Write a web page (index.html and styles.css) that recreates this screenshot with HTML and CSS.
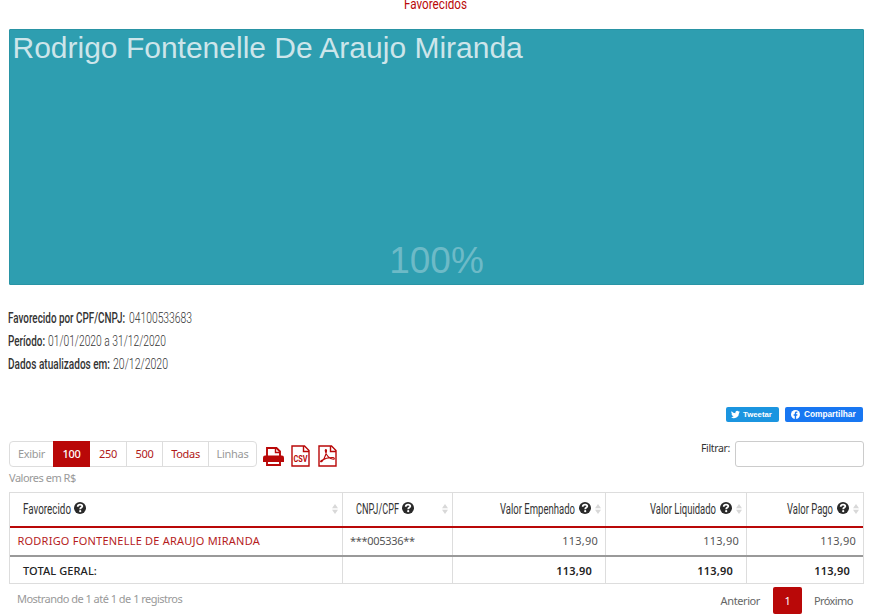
FILE: index.html
```
<!DOCTYPE html>
<html lang="pt-BR">
<head>
<meta charset="utf-8">
<title>Favorecidos</title>
<link rel="stylesheet" href="styles.css">
</head>
<body>
<svg class="defs" width="0" height="0">
  <symbol id="help" viewBox="0 0 12 12"><circle cx="6" cy="6" r="6" fill="#292929"/><path d="M3.700 4.700C3.800 3.300 4.800 2.700 6.100 2.700c1.300 0 2.200.6 2.200 1.600C8.300 5.600 6.200 5.600 6.200 7.200" fill="none" stroke="#fff" stroke-width="1.800"/><circle cx="6.200" cy="9.200" r="1.100" fill="#fff"/></symbol>
  <symbol id="sort" viewBox="0 0 6 10"><path d="M3 0l3 4.300H0zM3 10l3-4.300H0z" fill="#d8d8d8"/></symbol>
</svg>
<h1 class="heading"><svg class="narrow" width="64" height="20"><text x="0" y="15" textLength="63" lengthAdjust="spacingAndGlyphs">Favorecidos</text></svg></h1>
<section class="treemap">
  <div class="name">Rodrigo Fontenelle De Araujo Miranda</div>
  <div class="share">100%</div>
</section>
<section class="info">
  <div><svg class="narrow label" width="118" height="23"><text x="0" y="16" textLength="117" lengthAdjust="spacingAndGlyphs">Favorecido por CPF/CNPJ:</text></svg><svg class="narrow value" width="63" height="23"><text x="0" y="16" textLength="63" lengthAdjust="spacingAndGlyphs">04100533683</text></svg></div>
  <div><svg class="narrow label" width="37" height="23"><text x="0" y="16" textLength="37" lengthAdjust="spacingAndGlyphs">Período:</text></svg><svg class="narrow value" width="118" height="23"><text x="0" y="16" textLength="118" lengthAdjust="spacingAndGlyphs">01/01/2020 a 31/12/2020</text></svg></div>
  <div><svg class="narrow label" width="102" height="23"><text x="0" y="16" textLength="102" lengthAdjust="spacingAndGlyphs">Dados atualizados em:</text></svg><svg class="narrow value" width="55" height="23"><text x="0" y="16" textLength="55" lengthAdjust="spacingAndGlyphs">20/12/2020</text></svg></div>
</section>
<div class="social">
  <a class="tweet"><svg width="9" height="9" viewBox="0 0 24 24"><path fill="#fff" d="M24 4.600a10 10 0 0 1-2.800.8 5 5 0 0 0 2.100-2.700 10 10 0 0 1-3.100 1.200 4.900 4.900 0 0 0-8.400 4.500A14 14 0 0 1 1.700 3.100a4.900 4.900 0 0 0 1.500 6.600 5 5 0 0 1-2.200-.6 4.900 4.900 0 0 0 3.900 4.900 5 5 0 0 1-2.200.1 4.900 4.900 0 0 0 4.600 3.400A9.900 9.900 0 0 1 0 19.500 14 14 0 0 0 21.500 7.100 10 10 0 0 0 24 4.600z"/></svg><span>Tweetar</span></a>
  <a class="facebook"><svg width="9" height="9" viewBox="0 0 24 24"><circle cx="12" cy="12" r="12" fill="#fff"/><path d="M10 24v-9H7v-3.500h3V9c0-3 1.800-4.700 4.500-4.700l2.600.2v3h-1.500c-1.500 0-1.900.9-1.900 1.800v2.200H17l-.5 3.500h-2.800v9z" fill="#1877f2"/></svg><span>Compartilhar</span></a>
</div>
<div class="toolbar">
  <div class="pages"><span class="exibir">Exibir</span><a class="active">100</a><a>250</a><a>500</a><a class="todas">Todas</a><span class="linhas">Linhas</span></div>
  <div class="export">
    <svg width="21" height="19" viewBox="0 0 21 19"><path d="M4 9V1h9.500L17 4.500V9" fill="none" stroke="#b90808" stroke-width="1.900"/><path d="M12.500 1v4.500H17" fill="none" stroke="#b90808" stroke-width="1.400"/><path d="M2.500 8.500h16a2.300 2.300 0 0 1 2.500 2.300V15H0v-4.200a2.300 2.300 0 0 1 2.500-2.300z" fill="#b90808"/><path d="M4 14v4h13v-4" fill="none" stroke="#b90808" stroke-width="1.900"/></svg>
    <svg width="19" height="22" viewBox="0 0 19 22"><path d="M1 1h12.500L18 5.500V21H1zM12.500 1v5.500H18" fill="none" stroke="#b90808" stroke-width="1.400"/><text class="csv" x="2.500" y="17" textLength="14" lengthAdjust="spacingAndGlyphs">CSV</text></svg>
    <svg width="19" height="22" viewBox="0 0 19 22"><path d="M1 1h12.500L18 5.500V21H1zM12.500 1v5.500H18" fill="none" stroke="#b90808" stroke-width="1.400"/><path d="M2.800 16.800c1.500.4 5.400-5.600 5.700-11.100.1-1.600-1.500-1.500-1.200.2.600 4.100 4.200 8.600 8.300 8.400 1.200-.2.900-1.700-.8-1.800-4.200-.1-8.200 1-11.300 3-.9.600-1.200 1.100-.7 1.300z" fill="none" stroke="#b90808" stroke-width="1.100"/></svg>
  </div>
  <label class="filter"><span>Filtrar:</span><input type="text"></label>
</div>
<p class="unit">Valores em R$</p>
<div class="table">
  <div class="row head">
    <div><svg class="narrow" width="48" height="20"><text x="0" y="15" textLength="48" lengthAdjust="spacingAndGlyphs">Favorecido</text></svg><svg class="help"><use href="#help"/></svg><svg class="sort"><use href="#sort"/></svg></div>
    <div><svg class="narrow" width="43" height="20"><text x="0" y="15" textLength="43" lengthAdjust="spacingAndGlyphs">CNPJ/CPF</text></svg><svg class="help"><use href="#help"/></svg><svg class="sort"><use href="#sort"/></svg></div>
    <div class="num"><svg class="narrow" width="76" height="20"><text x="0" y="15" textLength="75" lengthAdjust="spacingAndGlyphs">Valor Empenhado</text></svg><svg class="help"><use href="#help"/></svg><svg class="sort"><use href="#sort"/></svg></div>
    <div class="num"><svg class="narrow" width="67" height="20"><text x="0" y="15" textLength="66" lengthAdjust="spacingAndGlyphs">Valor Liquidado</text></svg><svg class="help"><use href="#help"/></svg><svg class="sort"><use href="#sort"/></svg></div>
    <div class="num"><svg class="narrow" width="47" height="20"><text x="0" y="15" textLength="46" lengthAdjust="spacingAndGlyphs">Valor Pago</text></svg><svg class="help"><use href="#help"/></svg><svg class="sort"><use href="#sort"/></svg></div>
  </div>
  <div class="row data"><div><a class="person">RODRIGO FONTENELLE DE ARAUJO MIRANDA</a></div><div class="doc">***005336**</div><div class="num">113,90</div><div class="num">113,90</div><div class="num">113,90</div></div>
  <div class="row total"><div>TOTAL GERAL:</div><div></div><div class="num">113,90</div><div class="num">113,90</div><div class="num">113,90</div></div>
</div>
<footer class="footer">
  <span class="status">Mostrando de 1 até 1 de 1 registros</span>
  <nav><a class="prev">Anterior</a><a class="current">1</a><a class="next">Próximo</a></nav>
</footer>
</body>
</html>
```
FILE: styles.css
```
* { box-sizing: border-box; }
body { margin: 0; width: 874px; height: 616px; overflow: hidden; background: #fff; font-family: "Noto Sans", sans-serif; font-size: 11px; color: #444; }
svg { display: block; flex: none; }
.defs { position: absolute; }
.narrow { font-family: Roboto, sans-serif; font-size: 15px; fill: #333; overflow: visible; }
.heading { margin: -6px 0 0 404px; height: 35px; }
.heading .narrow { fill: #b90808; font-weight: 400; }
.treemap { margin-left: 9px; width: 855px; height: 256px; background: #2e9eb0; border: 1px solid #2994a5; border-radius: 1px; display: flex; flex-direction: column; justify-content: space-between; font-family: "Liberation Sans", sans-serif; }
.name { padding-left: 2.5px; font-size: 30px; line-height: 36px; color: #cde5ea; white-space: nowrap; }
.share { text-align: center; font-size: 37px; line-height: 46px; color: #6dbac7; }
.info { margin: 22px 0 0 8px; height: 69px; }
.info div { display: flex; }
.label { font-weight: 500; margin-right: 2.5px; }
.value { font-weight: 300; }
.social { display: flex; gap: 6px; margin: 31px 0 0 726px; }
.social a { display: flex; align-items: center; height: 15px; border-radius: 2px; color: #fff; font: 700 8px/15px "Liberation Sans", sans-serif; padding-left: 5px; white-space: nowrap; }
.tweet { width: 53px; background: #1b95e0; }
.tweet span { margin-left: 3px; font-size: 7.8px; }
.facebook { width: 78px; background: #1877f2; }
.facebook svg { margin-left: 1px; }
.facebook span { margin-left: 4px; font-size: 8.3px; }
.toolbar { display: flex; height: 26px; margin: 19px 0 0 9px; width: 855px; }
.pages { display: flex; width: 248px; border: 1px solid #ddd; border-radius: 4px; line-height: 24px; color: #999; text-align: center; letter-spacing: -.3px; }
.pages > * { width: 36px; border-right: 1px solid #ddd; }
.pages .exibir { width: 43px; border: 0; }
.pages a { color: #b01818; }
.pages .active { width: 37px; margin: -1px 0; line-height: 26px; background: #b90808; color: #fff; border: 0; font-weight: 500; }
.pages a:nth-child(3) { width: 37px; }
.pages .todas { width: 46px; }
.pages .linhas { flex: 1; border: 0; }
.export { display: flex; gap: 8px; margin: 4px 0 0 6px; }
.export svg:first-child { margin: 2px -1px 0 0; }
.csv { font: 700 9px Roboto, sans-serif; fill: #b90808; }
.filter { display: flex; margin-left: auto; gap: 5px; }
.filter span { font-size: 10.5px; line-height: 15px; color: #333; letter-spacing: -.35px; }
.filter input { width: 129px; height: 26px; border: 1px solid #ccc; border-radius: 3px; padding: 0 4px; }
.unit { margin: 3px 0 0 9px; height: 22px; line-height: 16px; color: #999; letter-spacing: -.5px; }
.table { margin-left: 9px; width: 855px; border: 1px solid #ddd; }
.row { display: grid; grid-template-columns: 333px 110px 153px 141px 116px; }
.row > div { border-right: 1px solid #ddd; display: flex; align-items: center; }
.row > div:last-child { border-right: 0; }
.row .num { justify-content: flex-end; }
.head { height: 35px; border-bottom: 2px solid #b90808; }
.head .narrow { font-size: 14px; }
.head > div { padding: 0 4px 2px 13px; }
.help { width: 12px; height: 12px; margin: 0 5px 1px 3px; }
.sort { width: 6px; height: 10px; margin-left: auto; }
.head .num .help { margin-right: 4px; }
.num .sort { margin-left: 0; }
.data { height: 29px; border-bottom: 2px solid #999; }
.data > div { padding: 0 7px 2px; letter-spacing: .22px; color: #555; }
.data .person { color: #b51c1c; }
.data .doc { letter-spacing: -.3px; }
.data > div:first-child { padding-left: 7.5px; }
.total { height: 26px; color: #222; font-weight: 500; }
.total > div { padding: 1px 13px 0; letter-spacing: .1px; }
.total .num { font-weight: 600; letter-spacing: .2px; }
.footer { display: flex; justify-content: space-between; margin: 3px 10px 0 17px; }
.status { line-height: 24px; height: 27px; color: #999; letter-spacing: -.52px; }
.footer nav { display: flex; line-height: 27px; color: #666; letter-spacing: -.4px; }
.current { width: 29px; margin: 0 12px 0 13px; background: #b90808; color: #fff; text-align: center; border-radius: 2px; }
.next { width: 50px; letter-spacing: -.6px; }
```
